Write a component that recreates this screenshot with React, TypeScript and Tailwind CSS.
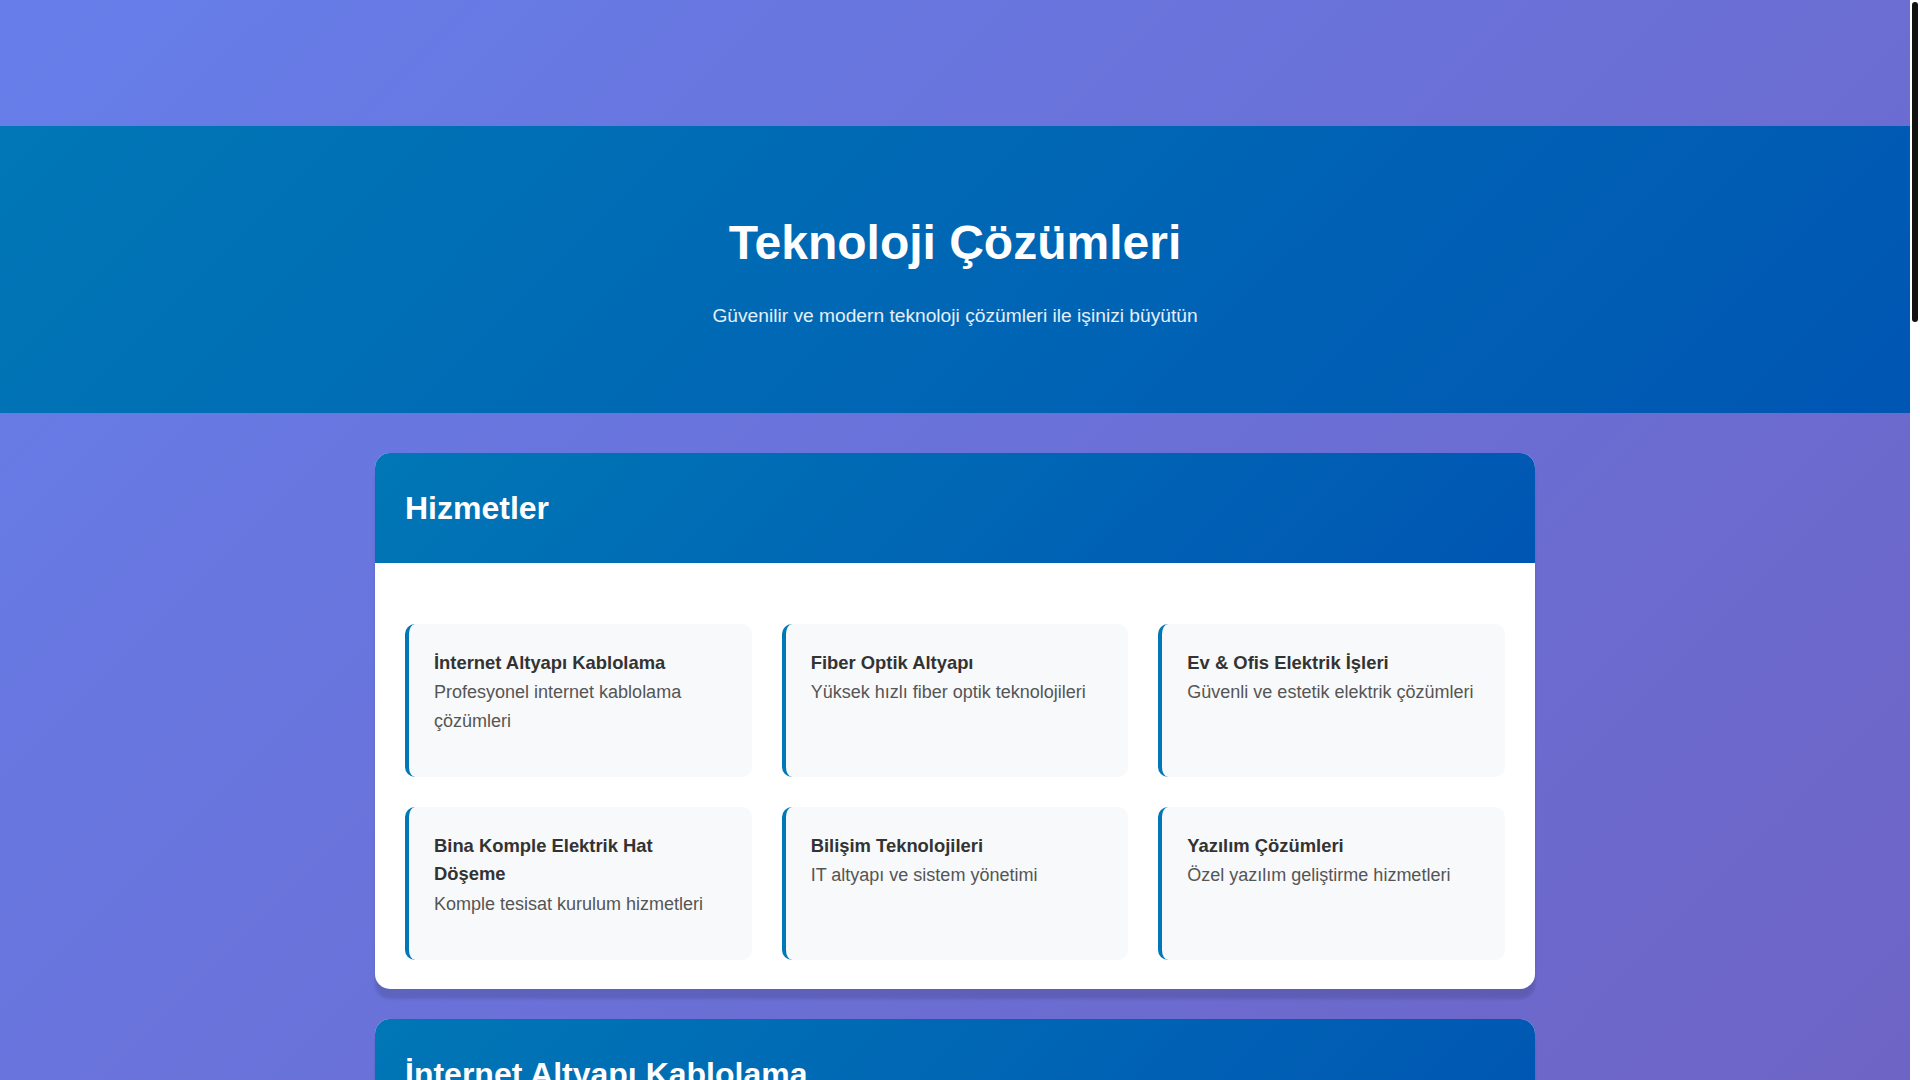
import React from "react";

interface Service {
  title: string;
  desc: string;
}

const services: Service[] = [
  { title: "İnternet Altyapı Kablolama", desc: "Profesyonel internet kablolama çözümleri" },
  { title: "Fiber Optik Altyapı", desc: "Yüksek hızlı fiber optik teknolojileri" },
  { title: "Ev & Ofis Elektrik İşleri", desc: "Güvenli ve estetik elektrik çözümleri" },
  { title: "Bina Komple Elektrik Hat Döşeme", desc: "Komple tesisat kurulum hizmetleri" },
  { title: "Bilişim Teknolojileri", desc: "IT altyapı ve sistem yönetimi" },
  { title: "Yazılım Çözümleri", desc: "Özel yazılım geliştirme hizmetleri" },
];

const details = [
  {
    title: "İnternet Altyapı Kablolama",
    text: "Ev ve iş yerleriniz için Cat6 ve Cat7 standartlarında yapısal kablolama, kabinet montajı ve test hizmetleri sunuyoruz.",
    items: ["Cat6 / Cat7 kablolama", "Rack kabinet kurulumu", "Patch panel sonlandırma", "Kablo test ve raporlama"],
  },
  {
    title: "Fiber Optik Altyapı",
    text: "Fiber optik kablo çekimi, füzyon ek ve OTDR ölçümleri ile kesintisiz ve yüksek hızlı bağlantı sağlıyoruz.",
    items: ["Fiber kablo çekimi", "Füzyon ek işlemleri", "OTDR ölçüm ve test", "FTTH çözümleri"],
  },
  {
    title: "Ev & Ofis Elektrik İşleri",
    text: "Priz, aydınlatma ve sigorta panosu işlerinde güvenli ve estetik elektrik çözümleri üretiyoruz.",
    items: ["Aydınlatma montajı", "Priz ve anahtar tesisatı", "Sigorta panosu yenileme", "Arıza tespit ve onarım"],
  },
  {
    title: "Bina Komple Elektrik Hat Döşeme",
    text: "Yeni ve tadilat projelerinde baştan sona komple elektrik tesisatı kurulumunu üstleniyoruz.",
    items: ["Proje ve keşif", "Ana dağıtım panosu", "Kat tesisatları", "Topraklama ve paratoner"],
  },
  {
    title: "Bilişim Teknolojileri",
    text: "İşletmenizin IT altyapısını kuruyor, sunucu ve ağ sistemlerinizi güvenle yönetiyoruz.",
    items: ["Sunucu kurulumu", "Ağ ve güvenlik duvarı", "Yedekleme çözümleri", "Teknik destek"],
  },
  {
    title: "Yazılım Çözümleri",
    text: "İhtiyaçlarınıza özel web, mobil ve masaüstü yazılımlar geliştiriyoruz.",
    items: ["Web uygulamaları", "Mobil uygulamalar", "Kurumsal yazılımlar", "Bakım ve destek"],
  },
];

const headerBg = "bg-[linear-gradient(135deg,#0077b6_0%,#0056b3_100%)]";

const ServiceCard: React.FC<Service> = ({ title, desc }) => (
  <div className="bg-[#f8f9fa] rounded-[10px] border-l-4 border-[#0077b6] px-[25px] pt-[25px] pb-[41px]">
    <h3 className="text-[18.4px] leading-[28.4px] font-bold text-[#333] mb-[1px]">{title}</h3>
    <p className="text-[18px] leading-[28.8px] text-[#555]">{desc}</p>
  </div>
);

// stands in for the browser scrollbar seen in the screenshot
const FakeScrollbar = () => (
  <div className="fixed top-0 right-0 w-[10px] h-screen bg-white">
    <div className="mx-auto mt-[2px] w-[6px] h-[320px] rounded-full bg-[#111]" />
  </div>
);

export default function App() {
  return (
    <div className="mr-[10px] min-h-screen bg-[linear-gradient(135deg,#667eea_0%,#764ba2_100%)] font-['Liberation_Sans',Arial,sans-serif]">
      <header className="h-[126px]" />

      <section className={`${headerBg} text-white text-center pt-[89px] pb-[86px]`}>
        <h1 className="text-[48px] leading-[55px] font-bold mb-[35px]">Teknoloji Çözümleri</h1>
        <p className="text-[19.2px] leading-[22px] text-white/90">
          Güvenilir ve modern teknoloji çözümleri ile işinizi büyütün
        </p>
      </section>

      <main className="max-w-[1200px] mx-auto px-5 pt-[40px] pb-[60px]">
        <section className="bg-white rounded-[15px] overflow-hidden shadow-[0_10px_3px_rgba(0,0,0,0.12)] mb-[30px]">
          <div className={`${headerBg} px-[30px] py-[30px]`}>
            <h2 className="text-[32px] leading-[50px] font-bold text-white">Hizmetler</h2>
          </div>
          <div className="px-[30px] pt-[61px] pb-[29px]">
            <div className="grid grid-cols-3 gap-[30px]">
              {services.map((s) => (
                <ServiceCard key={s.title} {...s} />
              ))}
            </div>
          </div>
        </section>

        {details.map((d) => (
          <section
            key={d.title}
            className="bg-white rounded-[15px] overflow-hidden shadow-[0_10px_3px_rgba(0,0,0,0.12)] mb-[30px]"
          >
            <div className={`${headerBg} px-[30px] py-[30px]`}>
              <h2 className="text-[32px] leading-[50px] font-bold text-white">{d.title}</h2>
            </div>
            <div className="p-[30px]">
              <p className="text-[18px] leading-[28.8px] text-[#555] mb-[20px]">{d.text}</p>
              <ul className="space-y-[8px]">
                {d.items.map((item) => (
                  <li
                    key={item}
                    className="bg-[#f8f9fa] rounded-[10px] border-l-4 border-[#0077b6] px-[25px] py-[10px] text-[18px] leading-[28.8px] text-[#333]"
                  >
                    {item}
                  </li>
                ))}
              </ul>
            </div>
          </section>
        ))}
      </main>

      <footer className="bg-[#1f2a44] text-white/80 text-center py-[30px] text-[16px]">
        © 2024 Teknoloji Çözümleri. Tüm hakları saklıdır.
      </footer>

      <FakeScrollbar />
    </div>
  );
}
